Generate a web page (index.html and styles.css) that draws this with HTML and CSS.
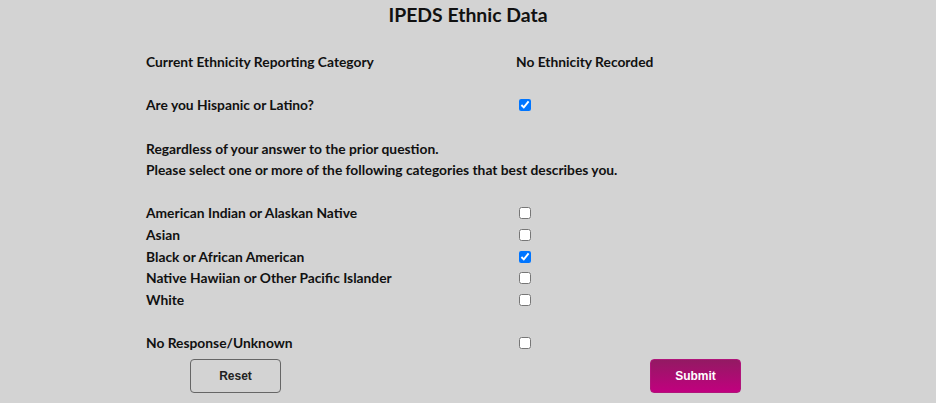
FILE: index.html
```html
<!DOCTYPE html>
<html>
<head>
<meta charset="utf-8">
<link rel="stylesheet" href="styles.css">
</head>
<body>
<div class="page">
  <h1 class="title">IPEDS Ethnic Data</h1>
  <form class="form">
    <div class="label">Current Ethnicity Reporting Category</div>
    <div class="value">No Ethnicity Recorded</div>
    <div class="spacer"></div>
    <div class="label">Are you Hispanic or Latino?</div>
    <div class="value"><input type="checkbox" class="cb" checked></div>
    <div class="spacer"></div>
    <div class="label wide">Regardless of your answer to the prior question.</div>
    <div class="label wide">Please select one or more of the following categories that best describes you.</div>
    <div class="spacer"></div>
    <div class="label">American Indian or Alaskan Native</div>
    <div class="value"><input type="checkbox" class="cb"></div>
    <div class="label">Asian</div>
    <div class="value"><input type="checkbox" class="cb"></div>
    <div class="label">Black or African American</div>
    <div class="value"><input type="checkbox" class="cb" checked></div>
    <div class="label">Native Hawiian or Other Pacific Islander</div>
    <div class="value"><input type="checkbox" class="cb"></div>
    <div class="label">White</div>
    <div class="value"><input type="checkbox" class="cb"></div>
    <div class="spacer"></div>
    <div class="label">No Response/Unknown</div>
    <div class="value"><input type="checkbox" class="cb"></div>
  </form>
  <div class="actions">
    <button type="button" class="btn btn-reset">Reset</button>
    <button type="button" class="btn btn-submit">Submit</button>
  </div>
</div>
</body>
</html>
```
FILE: styles.css
```css
html, body {
  margin: 0;
  padding: 0;
  background: #d3d3d3;
}
body {
  width: 936px;
  height: 403px;
  overflow: hidden;
  font-family: "Lato", "DejaVu Sans", sans-serif;
  color: #111;
}
.page {
  display: flex;
  flex-direction: column;
}
.title {
  margin: 0;
  height: 51px;
  padding-top: 3px;
  box-sizing: border-box;
  font-size: 19.4px;
  font-weight: bold;
  text-align: center;
  line-height: 24px;
}
.form {
  display: grid;
  grid-template-columns: 370px 200px;
  grid-auto-rows: 21.6px;
  padding-left: 146px;
  margin: 0;
  font-size: 13.8px;
  font-weight: bold;
}
.label, .value {
  display: flex;
  align-items: center;
  white-space: nowrap;
}
.wide {
  grid-column: 1 / 3;
}
.spacer {
  grid-column: 1 / 3;
}
.cb {
  margin: 1px 0 0 3px;
  width: 12px;
  height: 12px;
}
.actions {
  display: flex;
  padding-left: 190px;
  gap: 369px;
  margin-top: 6px;
}
.btn {
  width: 91px;
  height: 34px;
  border-radius: 4px;
  font-family: "Liberation Sans", Arial, sans-serif;
  font-weight: bold;
  font-size: 12px;
  cursor: pointer;
}
.btn-reset {
  background: #d3d3d3;
  border: 1px solid #666;
  color: #222;
}
.btn-submit {
  background: linear-gradient(to bottom, #931a63, #c1007f);
  border: 1px solid #b0157a;
  color: #fff;
}
```
